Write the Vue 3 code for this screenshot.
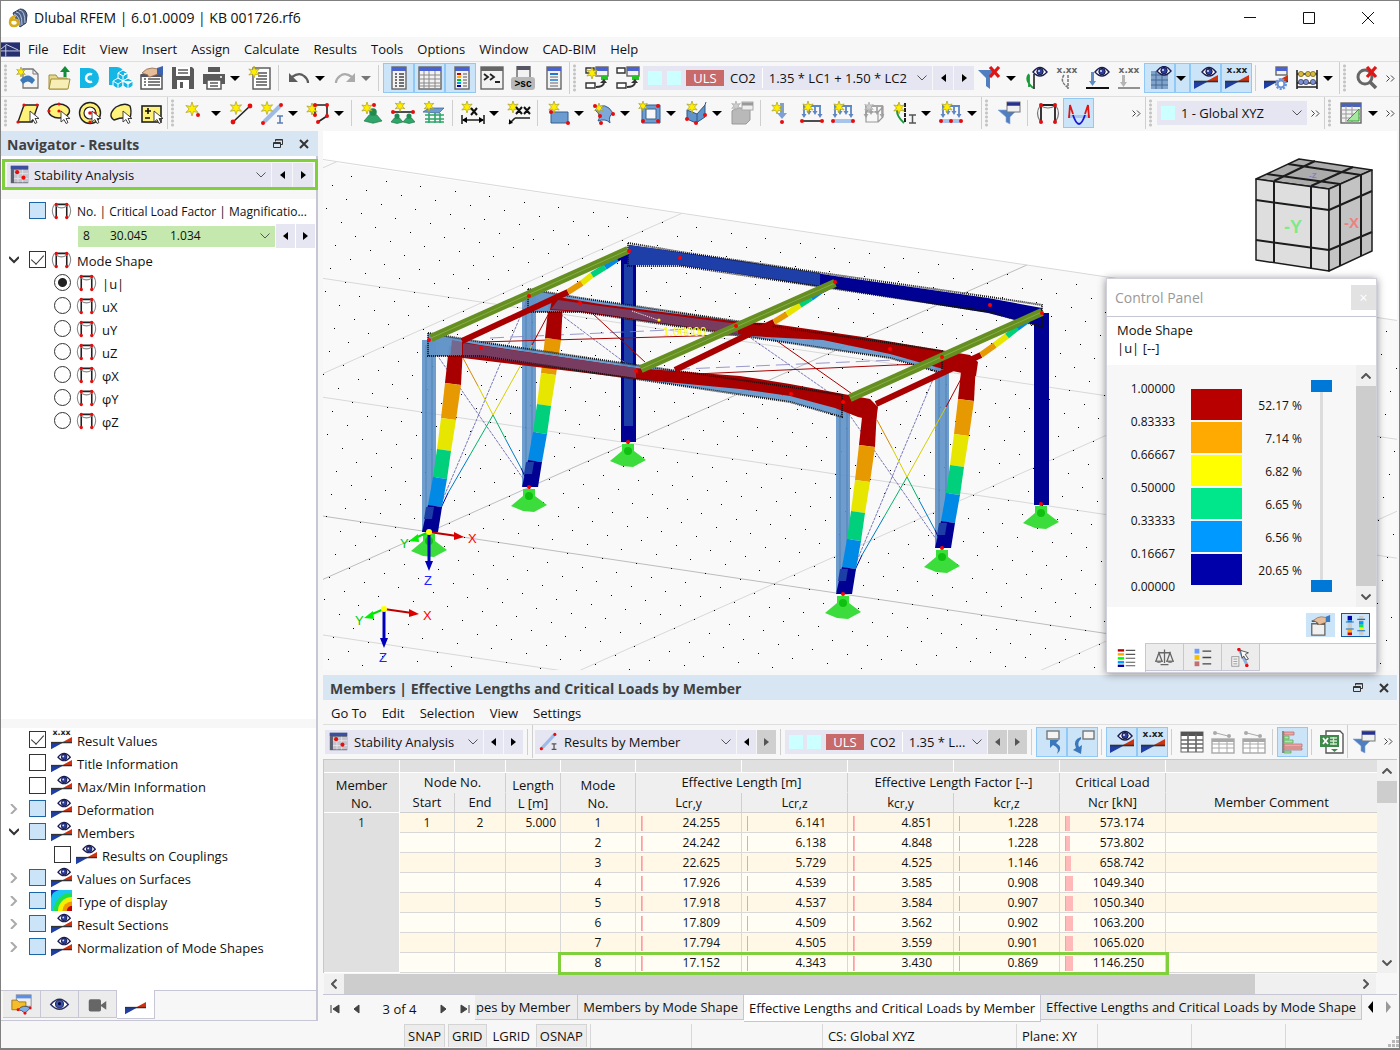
<script setup>
import { ref } from 'vue'

/* ---------- icon building blocks (24 x 24 canvas) ---------- */
const star = (x, y, r = 6, fill = '#ffee00', line = '#a89c28') => {
  const pts = []
  for (let k = 0; k < 12; k++) {
    const q = k % 2 ? r * 0.42 : r
    const a = (Math.PI * k) / 6 - Math.PI / 2
    pts.push((x + q * Math.cos(a)).toFixed(1) + ',' + (y + q * Math.sin(a)).toFixed(1))
  }
  return `<polygon points="${pts.join(' ')}" fill="${fill}" stroke="${line}" stroke-width=".7"/>`
}
const dot = (x, y, r = 2) => `<circle cx="${x}" cy="${y}" r="${r}" fill="#e80c0c"/>`
const line = (d, c = '#111', w = 1.5) => `<path d="${d}" fill="none" stroke="${c}" stroke-width="${w}"/>`
const eye = (x, y) =>
  `<path d="M${x - 7} ${y}q7 -9 14 0q-7 8 -14 0z" fill="#fff" stroke="#1b1b55" stroke-width="1.4"/><circle cx="${x}" cy="${y - 0.4}" r="3.2" fill="#2b3f9e" stroke="#15153f"/><circle cx="${x - 1}" cy="${y - 1}" r="1" fill="#dfe4ff"/>`
const xxx = (c = '#222') =>
  `<text x="12" y="7" font-size="9" font-weight="700" text-anchor="middle" fill="${c}" font-family="DejaVu Sans">x.xx</text>`
const wedge =
  '<path d="M0 16h13l-13 7z" fill="#1d3fa6"/><path d="M13 15l11 -6v6z" fill="#d2300f"/><path d="M0 15.500h24" stroke="#333" stroke-width="1.6"/>'
const cursor = '<path d="M14 10v11l3 -2.500 2 4 2 -1 -2 -4h4z" fill="#fff" stroke="#333" stroke-width=".9"/>'
const win = (x, y, w, h, bar = '#4a63d0') =>
  `<rect x="${x}" y="${y}" width="${w}" height="${h}" fill="#f2f2f2" stroke="#666" stroke-width="1.4"/><rect x="${x}" y="${y}" width="${w}" height="4" fill="${bar}"/>`
const funnel = '<path d="M1 9h19l-7 7v7l-4 -2v-5z" fill="#4f7fc0" stroke="#8aa9d8" stroke-width=".6"/>'
const cross = '<path d="M12 1l9 10M21 1l-9 10" stroke="#e01515" stroke-width="3.200"/>'
const arrows = (c = '#5d86c4') =>
  `<path d="M3 5h18M4 5v10M9 5v6M15 5v6M20 5v10" stroke="${c}" stroke-width="1.800" fill="none"/><path d="M1.500 13h5L4 17zM6.500 10h5L9 14zM12.500 10h5L15 14zM17.500 13h5L20 17z" fill="${c}"/>`
const greenFoot = (x, y, s) =>
  `<path d="M${x - s} ${y}l${s * 0.6} -${s * 0.7}h${s * 0.8}l${s * 0.6} ${s * 0.7}l-${s} ${s * 0.25}z" fill="#2fa56a" stroke="#146b3b" stroke-width=".6"/><circle cx="${x}" cy="${y - s}" r="${s * 0.42}" fill="#1f8a50"/>`
const frameShape =
  line('M6 20V5h12v15', '#222', 1.8) + line('M4 20q-5 -8 0 -15M20 20q5 -8 0 -15M6 7q6 4 12 0', '#888', 1.2) +
  dot(6, 5, 1.9) + dot(18, 5, 1.9) + dot(6, 20, 1.9) + dot(18, 20, 1.9)
const tableLines = (c) =>
  `<rect x="1" y="9" width="22" height="14" fill="#fff" stroke="${c}" stroke-width="1.4"/><path d="M1 14h22M1 18h22M8 10v13M16 10v13" stroke="${c}" stroke-width="1"/><rect x="1" y="9" width="22" height="3" fill="${c}"/>`

const icons = {
  newModel: '<path d="M7 3h10l5 5v14H7z" fill="#f4f4f4" stroke="#777" stroke-width="1.300"/><path d="M17 3v5h5" fill="none" stroke="#777"/><path d="M4 14q8 -9 15 0l-3 4q-4 -5 -9 0z" fill="#3d79b8"/>' + star(5, 6, 5),
  open: '<path d="M2 9h7l2 3h9v11H2z" fill="#e5d98c" stroke="#a08f3a"/><path d="M2 23l2 -10h19l-2 10z" fill="#f6eeb4" stroke="#a08f3a"/><path d="M18 0l-5 6h3.500v5h3V6H23z" fill="#138a3c"/>',
  dlubal: '<path d="M2 2h9a10 10 0 0 1 0 20H2z" fill="#14b6e6"/><path d="M14 8.500a4 4 0 1 0 0 7" fill="none" stroke="#fff" stroke-width="2.500"/>',
  cubes: '<path d="M0 1h8a8 8 0 0 1 7 5v13H0z" fill="#14b6e6"/><g fill="#14b6e6" stroke="#fff" stroke-width="1"><path d="M14 4l5 3v5l-5 3 -5 -3V7zM9 7l5 3 5 -3M14 10v5"/><path d="M9 12l5 3v5l-5 3 -5 -3v-5zM4 15l5 3 5 -3M9 18v5"/><path d="M19 12l5 3v5l-5 3 -5 -3v-5zM14 15l5 3 5 -3M19 18v5"/></g>',
  handList: '<rect x="1" y="9" width="21" height="14" fill="#fff" stroke="#555" stroke-width="1.500"/><path d="M4 13h2M4 16h2M4 19h2M8 13h12M8 16h12M8 19h12" stroke="#555" stroke-width="1.500"/><rect x="1" y="8" width="21" height="3" fill="#556"/><path d="M2 7q4 -5 10 -5l6 1v5l-8 3q-3 0 -2 -2z" fill="#e6bd98" stroke="#8a6a50" stroke-width=".8"/><path d="M17 2l6 -2v9l-6 -1z" fill="#3b63b0"/>',
  save: '<path d="M1 1h20l2 2v20H1z" fill="#5a5a5a"/><path d="M5 1h14v9H5z" fill="#fff"/><path d="M7 4h10M7 7h10" stroke="#5a5a5a" stroke-width="1.500"/><path d="M6 14h12v9H6z" fill="#fff"/><path d="M9 16h3v6H9z" fill="#5a5a5a"/>',
  print: '<path d="M6 1h12v5H6z" fill="#5a5a5a"/><path d="M1 8h22v10H1z" fill="#5a5a5a"/><path d="M5 14h14v9H5z" fill="#fff" stroke="#5a5a5a" stroke-width="1.500"/><path d="M8 17h8M8 20h8" stroke="#5a5a5a" stroke-width="1.400"/><path d="M18 11h2" stroke="#fff" stroke-width="1.500"/>',
  pageStar: '<rect x="5" y="2" width="17" height="21" fill="#fff" stroke="#555" stroke-width="1.400"/><path d="M10 7h9M10 10h9M8 13h11M8 16h11M8 19h11" stroke="#555" stroke-width="1.300"/>' + star(6, 6, 6),
  undo: '<path d="M5 11q7 -5 12 -1q4 3 4 7" fill="none" stroke="#5c5c5c" stroke-width="2.200" /><path d="M2 7v9h9z" fill="#5c5c5c"/>',
  redo: '<path d="M19 11q-7 -5 -12 -1q-4 3 -4 7" fill="none" stroke="#ababab" stroke-width="2.200" /><path d="M22 7v9h-9z" fill="#ababab"/>',
  winList: win(5, 1, 14, 22) + line('M8 8h2M12 8h5M8 11h2M12 11h5M8 14h2M12 14h5M8 17h2M12 17h5M8 20h2M12 20h5', '#444', 1.3),
  winGrid: win(1, 1, 22, 22) + line('M1 9h22M1 13h22M1 17h22M1 20h22M6 5v18M11 5v18M17 5v18', '#888', 1),
  winColor: win(6, 1, 14, 22) + '<path d="M8 8h4" stroke="#c00" stroke-width="2"/><path d="M8 11h4" stroke="#fa0" stroke-width="2"/><path d="M8 14h4" stroke="#0c0" stroke-width="2"/><path d="M8 17h4" stroke="#09f" stroke-width="2"/><path d="M8 20h4" stroke="#00b" stroke-width="2"/>' + line('M14 8h4M14 11h4M14 14h4M14 17h4M14 20h4', '#555', 1),
  console: win(1, 1, 22, 22, '#666') + line('M4 8l4 3 -4 3M10 8l4 3 -4 3M15 16h5', '#222', 1.8),
  script: win(6, 0, 13, 14, '#556') + '<rect x="0" y="11" width="24" height="13" rx="3" fill="#b8b8b8"/><text x="12" y="21" font-size="10" font-weight="700" text-anchor="middle" font-family="Liberation Sans">&gt;sc</text>',
  winBlue: win(5, 1, 14, 22) + line('M8 8h8', '#27c', 2) + line('M8 11h8M8 17h8M8 20h8', '#666', 1.2) + line('M8 14h8', '#27c', 1.5),
  comboNew: win(11, 1, 12, 9) + '<rect x="16" y="10" width="7" height="4" fill="#23c323"/><path d="M1 2h8v5H1zM1 17h9v5H1z" fill="#fff" stroke="#333" stroke-width="1.400"/><path d="M11 21q7 0 8 -4" fill="none" stroke="#333" stroke-width="2"/><path d="M15 17h7l-3 -4z" fill="#333"/>' + star(7, 7, 6),
  combo: win(11, 1, 12, 9) + '<rect x="16" y="10" width="7" height="4" fill="#23c323"/><path d="M1 2h8v5H1zM1 17h9v5H1z" fill="#fff" stroke="#333" stroke-width="1.400"/><path d="M11 21q7 0 8 -4" fill="none" stroke="#333" stroke-width="2"/><path d="M15 17h7l-3 -4z" fill="#333"/>',
  filterX: '<path d="M0 4h19l-7 8v11l-4 -3v-8z" fill="#4f7fc0"/>' + cross,
  loadEye: line('M5 9v12M5 8q-5 6 4 14', '#1b9a3a', 1.8) + line('M10 8v15', '#222', 1.6) + eye(16, 6),
  loadXxx: xxx('#666') + '<path d="M9 9q-5 7 5 13M13 9v14" fill="none" stroke="#777" stroke-width="1.500" stroke-dasharray="3 1"/>',
  arrowEye: '<path d="M5 6h3v9h2l-3.500 5 -3.500 -5h2z" fill="#5f8cc5"/>' + line('M0 22h23', '#111', 2) + eye(16, 6),
  arrowXxx: xxx('#666') + '<path d="M5 9h3v7h2l-3.500 5 -3.500 -5h2z" fill="#b5b5b5"/>' + line('M1 22h22', '#777', 1.6),
  gridEye: '<path d="M3 5h17v18H3z" fill="#82a4cb"/>' + line('M3 9h17M3 14h17M3 19h17M8 5v18M14 5v18', '#456b96', 1) + eye(16, 5),
  resEye: wedge + eye(15, 6),
  resXxx: xxx() + wedge,
  wedge,
  resGear: win(12, 1, 11, 8) + wedge + '<circle cx="17" cy="18" r="4.500" fill="#fff" stroke="#6a94d8" stroke-width="3" stroke-dasharray="2 1.100"/><circle cx="17" cy="18" r="3.400" fill="none" stroke="#6a94d8" stroke-width="2"/>',
  abacus: line('M2 4v19M22 4v19M2 8h20M2 17h20M2 21h20', '#222', 1.6) + '<g fill="#d6b83a" stroke="#6b5a15" stroke-width=".7"><circle cx="6" cy="8" r="2.600"/><circle cx="13" cy="8" r="2.600"/><circle cx="18" cy="8" r="2.600"/></g><g fill="#7a8fd6" stroke="#334" stroke-width=".7"><circle cx="6" cy="16" r="2.600"/><circle cx="11" cy="16" r="2.600"/><circle cx="18" cy="16" r="2.600"/></g>',
  zoomX: '<circle cx="10" cy="11" r="7" fill="none" stroke="#666" stroke-width="3"/><path d="M15 16l6 6" stroke="#666" stroke-width="3.500"/>' + cross,
  selPara: '<path d="M8 4h14l-6 17H2z" fill="#fff27a" stroke="#222" stroke-width="1.400"/>' + dot(8, 4, 1.6) + dot(21, 4, 1.6) + dot(2, 21, 1.6) + cursor,
  selEllipse: '<ellipse cx="12" cy="10" rx="10.500" ry="7" fill="#fff27a" stroke="#222" stroke-width="1.400"/>' + dot(12, 3, 1.6) + dot(2, 10, 1.6) + dot(12, 10, 1.6) + cursor,
  selRing: '<circle cx="12" cy="12" r="10.500" fill="#fff27a" stroke="#222" stroke-width="1.400"/><circle cx="12" cy="12" r="6" fill="#fff" stroke="#222" stroke-width="1.200"/>' + dot(12, 12, 1.8) + dot(12, 21, 1.6) + dot(17, 12, 1.6) + cursor,
  selPoly: '<path d="M7 6q9 -5 14 -1q2 5 0 12q-9 -1 -16 2q-7 -5 2 -13z" fill="#fff27a" stroke="#222" stroke-width="1.400"/>' + cursor,
  selPm: '<rect x="2" y="5" width="19" height="16" fill="#fff27a" stroke="#222" stroke-width="1.600"/>' + line('M5 10h6M8 7v6M5 17h5', '#111', 1.6) + cursor,
  starDot: star(9, 8, 7) + dot(15, 14),
  starLine: line('M4 21L21 5', '#222', 1.6) + star(7, 7, 6.5) + dot(4, 21, 2.4) + dot(21, 5, 2.4),
  starMember: line('M4 21L20 5', '#9ebbe6', 4) + star(7, 7, 6.5) + dot(3, 22) + dot(21, 4) + line('M17 15h6M20 15v7M17 22h6', '#5c7cb8', 1.6),
  starPoly: line('M9 14V4h12v11l-9 6', '#222', 1.6) + star(6, 8, 6) + dot(9, 4) + dot(21, 4) + dot(9, 14) + dot(21, 15) + dot(12, 21),
  supNode: greenFoot(13, 20, 9) + star(7, 7, 6) + dot(14, 4),
  supLine: greenFoot(6, 21, 6) + greenFoot(18, 21, 6) + line('M2 11h20', '#222', 1.6) + star(9, 5, 5.5) + dot(2, 11) + dot(22, 11),
  supSurf: line('M3 14h19M3 18h19M3 21h19M7 12v10M13 12v10M18 12v10', '#2fa56a', 1.6) + '<path d="M1 11l6 -4h15l-5 5z" fill="#6d9cd0" stroke="#35608f" stroke-width=".7"/>' + star(7, 5, 5.5),
  dimX: line('M1 14v9M23 14v9M2 19h20', '#222', 1.6) + '<path d="M1 19l5 -3v6zM23 19l-5 -3v6z"/>' + star(6, 6, 6) + line('M10 7l6 7M16 7l-6 7', '#111', 2),
  dimXX: line('M8 17h15M8 17l-6 6', '#222', 1.6) + '<path d="M2 23v-5l4 4z"/>' + star(6, 6, 6) + line('M9 6l6 7M15 6l-6 7M17 6l6 7M23 6l-6 7', '#111', 2),
  surf: '<path d="M5 11h17v11H5z" fill="#6d9cd0" stroke="#35608f"/>' + star(8, 6, 6) + dot(5, 11) + dot(22, 22),
  surfCurve: '<path d="M3 9q10 -10 18 3q-5 3 -3 10q-4 -5 -12 -2q4 -6 -3 -11z" fill="#7fa8da" stroke="#35608f"/>' + star(7, 7, 5) + dot(3, 5) + dot(21, 13) + dot(8, 15) + dot(9, 22),
  opening: '<path d="M4 4h18v18H4zM8 8v10h10V8z" fill="#6d9cd0" stroke="#35608f" fill-rule="evenodd"/>' + star(5, 5, 5) + dot(20, 5) + dot(5, 20) + dot(20, 20),
  solid: '<path d="M3 9l10 4 8 -9v12l-9 6 -9 -4z" fill="#5f93cb" stroke="#2d5788"/><path d="M13 13v9M21 4l1 -3" stroke="#2d5788"/>' + star(8, 6, 6) + dot(3, 18) + dot(12, 22) + dot(21, 14),
  boxGrey: '<path d="M2 10l4 -3h14v12l-4 4H2z" fill="#b9b9b9" stroke="#999"/>' + star(6, 5, 5, '#ccc', '#aaa') + '<rect x="12" y="1" width="11" height="8" fill="#eee" stroke="#aaa"/><path d="M12 3h11" stroke="#999" stroke-width="3"/>',
  loadN: '<path d="M11 2h4v10h3l-5 6 -5 -6h3z" fill="#7da0d6"/>' + star(8, 7, 6) + dot(13, 21),
  loadM: arrows() + line('M2 20h20', '#222', 1.6) + star(8, 6, 6) + dot(2, 20) + dot(22, 20),
  loadS: arrows() + '<path d="M2 18h20v4H2z" fill="#a9c4ea"/>' + star(8, 6, 6) + dot(2, 20) + dot(22, 20),
  loadSolid: arrows('#a5a5a5') + line('M4 11h12v10H4zM4 11l5 -5M16 11l5 -5v10l-5 5', '#999', 1.2) + star(7, 6, 5, '#ccc', '#aaa'),
  imper: line('M6 3q-6 9 5 19', '#1b9a3a', 1.8) + '<path d="M12 2v20" stroke="#222" stroke-width="2" stroke-dasharray="4 1"/>' + star(6, 7, 6) + line('M16 14h7M19.500 14v8M16 22h7', '#555', 1.5),
  loadFree: arrows() + '<path d="M2 18h20v4H2z" fill="#a9c4ea"/>' + star(8, 6, 6) + dot(2, 20) + dot(12, 20) + dot(22, 20),
  filterWin: funnel + '<rect x="10" y="1" width="13" height="10" fill="#f0f0f0" stroke="#777"/><path d="M10 3h13" stroke="#26308f" stroke-width="3.500"/>',
  frame: frameShape,
  frameBig: line('M5 21V4h14v17', '#222', 1.8) + line('M4 20q-5 -8 0 -15M20 20q5 -8 0 -15M5 5q7 4 14 0', '#777', 1.2) + dot(5, 4) + dot(19, 4) + dot(5, 21) + dot(19, 21),
  diagram: '<path d="M1 14h22v3H1z" fill="#a9c4e8"/>' + line('M2 17L3 4l3 9', '#e01515', 1.8) + line('M22 17L21 4l-3 9', '#e01515', 1.8) + line('M6 14q6 18 12 0', '#1616d8', 1.8),
  sheet: win(1, 2, 20, 20, '#4a63b8') + line('M1 9h20M1 13h20M1 17h20M6 5v17M12 5v17', '#999', 1) + '<path d="M19 8v12H7z" fill="#a6e8a0" stroke="#3a9a3a"/>',
  stability: '<path d="M1 1h22v22H1z" fill="#5b5f70"/><path d="M1 1h22v4H1z" fill="#3a4f9e"/><path d="M5 6h18v16H5z" fill="#c4c4cc"/>' + line('M10 6v16M16 6v16M5 11h18M5 17h18', '#e8e8ee', 1) + dot(9, 9, 2.6) + dot(17, 16, 2.6),
  member: line('M4 20L19 4', '#9ebbe6', 4) + dot(3, 21) + dot(20, 3) + line('M16 15h6M19 15v7M16 22h6', '#555', 1.6),
  arrowOut: '<rect x="7" y="1" width="12" height="8" fill="#f4f4f4" stroke="#777" stroke-width="1.400"/><path d="M10 10h9l-3 3q8 5 1 11q3 -6 -4 -9l-3 3z" fill="#3a78bb"/>',
  arrowIn: '<rect x="12" y="1" width="11" height="8" fill="#f4f4f4" stroke="#777" stroke-width="1.400"/><path d="M10 7q-9 3 -5 11l-3 2 8 4 1 -9 -3 2q-2 -5 2 -8z" fill="#3a78bb"/>',
  tableA: '<rect x="1" y="2" width="22" height="20" fill="#fff" stroke="#666"/><path d="M1 4h22" stroke="#555" stroke-width="4"/>' + line('M1 10h22M1 14h22M1 18h22M8 4v18M16 4v18', '#666', 1.6),
  tableB: tableLines('#a8a8a8') + '<path d="M5 3l12 3" stroke="#aaa"/><circle cx="4" cy="3" r="2" fill="#aaa"/><circle cx="18" cy="6" r="2" fill="#aaa"/>',
  bars: line('M2 1v22', '#777', 1.6) + '<path d="M3 2h10v3H3zM3 14h18v3H3zM3 18h18v2H3z" fill="#f0a6a6" stroke="#b06b6b" stroke-width=".7"/><path d="M3 6h5v3H3zM3 10h9v3H3zM3 21h7v2H3z" fill="#a6e8a6" stroke="#5a9a5a" stroke-width=".7"/>',
  excel: '<path d="M6 1h14l3 3v19H6z" fill="#fff" stroke="#555" stroke-width="1.400"/><path d="M0 5h19v12H0z" fill="#3e8a4a"/>' + line('M3 8l5 6M8 8l-5 6', '#fff', 1.8) + line('M10 8h7M10 11h7M10 14h7M13.500 7v8', '#cfe8cf', 1.3) + '<path d="M11 19h7l-3.500 3z" fill="#3e8a4a"/>',
  contour: '<path d="M0 0h24v24H0z" fill="#19c8f0"/><path d="M0 0h9q-8 2 -9 9z" fill="#1c2fb8"/><path d="M24 3A21 21 0 0 0 3 24h21z" fill="#1fdf4b"/><path d="M24 8A16 16 0 0 0 8 24h16z" fill="#f6f000"/><path d="M24 13A11 11 0 0 0 13 24h11z" fill="#f09a00"/><path d="M24 18a6 6 0 0 0 -6 6h6z" fill="#c80000"/>',
  folderTab: '<rect x="6" y="1" width="17" height="13" fill="#eee" stroke="#888"/><path d="M6 3h17" stroke="#5c8fe8" stroke-width="4"/><path d="M1 7h6l2 2h8v9H1z" fill="#f5bd2a" stroke="#96721a"/><path d="M8 18q6 -7 14 -2l-6 6q-4 -4 -8 -4z" fill="#7fb0ea" stroke="#333" stroke-width=".8"/>' + dot(8, 18, 1.6) + dot(22, 16, 1.6) + dot(16, 22, 1.6),
  eyeTab: '<path d="M2 12q10 -12 20 0q-10 11 -20 0z" fill="#fff" stroke="#2a2f66" stroke-width="1.700"/><circle cx="12" cy="11.500" r="4.600" fill="#3b52b0" stroke="#15153f"/><circle cx="12" cy="11" r="1.800" fill="#0a0a2a"/>',
  camera: '<rect x="2" y="6" width="14" height="14" rx="2" fill="#666"/><path d="M15 13l7 -5v10z" fill="#666"/>',
  legend: '<path d="M1 3h8" stroke="#b00" stroke-width="3"/><path d="M1 8h8" stroke="#fa0" stroke-width="3"/><path d="M1 13h8" stroke="#0f0" stroke-width="3"/><path d="M1 18h8" stroke="#09f" stroke-width="3"/><path d="M1 22.500h8" stroke="#00a" stroke-width="3"/>' + line('M11 3h12M11 8h12M11 13h12M11 18h12M11 22.500h12', '#555', 1.4),
  scales: line('M12 2v17M7 21h10M4 6h16M5 6L1 17h8zM19 6l-4 11h8z', '#666', 1.6) + '<path d="M0 16h10q-5 6 -10 0zM14 16h10q-5 6 -10 0z" fill="#777"/>',
  legend2: '<path d="M2 1h6v6H2z" fill="#6a9cff"/><path d="M2 9h6v6H2z" fill="#f5c000"/><path d="M2 17h6v6H2z" fill="#c07070"/>' + line('M12 4h11M12 12h11M12 20h11', '#444', 1.6),
  pick: '<rect x="1" y="11" width="9" height="12" fill="#f4f4f4" stroke="#888"/>' + line('M3 14h5M3 17h5M3 20h5', '#888', 1) + line('M11 3l9 18', '#8fb0e0', 4) + dot(10, 2, 2.2) + dot(20, 22, 2.2) + '<path d="M12 3l10 3 -4 2 4 6 -3 1 -3 -5 -2 3z" fill="#fff" stroke="#333"/>',
  handBox: '<path d="M2 10h15v13H2z" fill="#f0f0f0" stroke="#666" stroke-width="1.500"/><path d="M2 7h5l2 3h8" fill="none" stroke="#555" stroke-width="2"/><path d="M4 6q5 -4 9 -4l6 1v5l-8 3q-2 0 -2 -2z" fill="#e6bd98" stroke="#8a6a50" stroke-width=".8"/><path d="M18 2l5 -2v8h-5z" fill="#3b7ac0"/>',
  gauges: '<path d="M3 1h5v22H3zM16 1h5v22h-5z" fill="#ccc"/><path d="M3 1h5v5H3z" fill="#00a"/><path d="M3 6h5v2H3z" fill="#09f"/><path d="M3 17h5v3H3z" fill="#fa0"/><path d="M3 20h5v3H3z" fill="#c00"/><path d="M16 7h5v4h-5z" fill="#09f"/><path d="M16 11h5v4h-5z" fill="#0e4"/><path d="M16 14h5v3h-5z" fill="#fe0"/>' + line('M1 8h9M1 16h9M14 5h9M14 18h9', '#1a6fc0', 1.4)
}

const b = (icon, label, on = false) => ({ t: 'btn', icon, label, on })
const d = (label = 'More', on = false) => ({ t: 'drop', label, on })
const sep = { t: 'sep' }
const grip = { t: 'grip' }
const end = { t: 'end' }

const menus = ['File', 'Edit', 'View', 'Insert', 'Assign', 'Calculate', 'Results', 'Tools', 'Options', 'Window', 'CAD-BIM', 'Help']

const bar1 = [
  b('newModel', 'New'), b('open', 'Open'), b('dlubal', 'Dlubal Center'), b('cubes', 'Blocks'), b('handList', 'Base data'), b('save', 'Save'),
  b('print', 'Print'), d(), b('pageStar', 'Printout report'), sep, b('undo', 'Undo'), d(), b('redo', 'Redo'), { ...d(), off: true }, sep,
  b('winList', 'Navigator', true), b('winGrid', 'Tables', true), b('winColor', 'Control panel', true), b('console', 'Console'), b('script', 'Script'), b('winBlue', 'Messages'),
  end, grip, b('comboNew', 'New combination'), b('combo', 'Combinations'), { t: 'case' },
  b('filterX', 'Clear filter'), d(), b('loadEye', 'Show loads'), b('loadXxx', 'Load values'), b('arrowEye', 'Show reactions'), b('arrowXxx', 'Reaction values'),
  b('gridEye', 'Show mesh', true), d('Mesh options', true), b('resEye', 'Show results', true), b('resXxx', 'Show values', true), sep,
  b('resGear', 'Result settings'), b('abacus', 'Calculate'), d(), { t: 'fill' }, end, grip, b('zoomX', 'Reset zoom'), { t: 'more' }
]
const bar2 = [
  b('selPara', 'Select parallelogram'), b('selEllipse', 'Select ellipse'), b('selRing', 'Select ring'), b('selPoly', 'Select polygon'), b('selPm', 'Add to selection'),
  end, grip, b('starDot', 'Node'), d(), b('starLine', 'Line'), b('starMember', 'Member'), d(), b('starPoly', 'Polyline'), d(), sep,
  b('supNode', 'Nodal support'), b('supLine', 'Line support'), b('supSurf', 'Surface support'), sep, b('dimX', 'Dimension'), d(), b('dimXX', 'Note'), sep,
  b('surf', 'Surface'), d(), b('surfCurve', 'Curved surface'), d(), b('opening', 'Opening'), d(), b('solid', 'Solid'), d(), b('boxGrey', 'Block'), sep,
  b('loadN', 'Nodal load'), b('loadM', 'Member load'), b('loadS', 'Surface load'), b('loadSolid', 'Solid load'), b('imper', 'Imperfection'), d(), b('loadFree', 'Free load'), d(),
  end, grip, b('filterWin', 'Filter'), sep, b('frameBig', 'Mode shape'), b('diagram', 'Diagram', true), { t: 'fill' }, { t: 'more' },
  end, grip, { t: 'axes' }, { t: 'more' }, end, grip, b('sheet', 'Table'), d(), { t: 'more' }
]

/* ---------- navigator ---------- */
const dof = ref('|u|')
const dofs = ['|u|', 'uX', 'uY', 'uZ', 'φX', 'φY', 'φZ']
const lower = [
  { n: 'Result Values', icon: 'resXxx', on: true },
  { n: 'Title Information', icon: 'resEye' },
  { n: 'Max/Min Information', icon: 'resEye' },
  { n: 'Deformation', icon: 'resEye', part: true, arrow: 'right' },
  { n: 'Members', icon: 'resEye', part: true, arrow: 'down' },
  { n: 'Results on Couplings', icon: 'resEye', child: true },
  { n: 'Values on Surfaces', icon: 'resEye', part: true, arrow: 'right' },
  { n: 'Type of display', icon: 'contour', part: true, arrow: 'right' },
  { n: 'Result Sections', icon: 'resEye', part: true, arrow: 'right' },
  { n: 'Normalization of Mode Shapes', icon: 'resEye', part: true, arrow: 'right' }
]
const navTabs = [
  { icon: 'folderTab', label: 'Data' },
  { icon: 'eyeTab', label: 'Display' },
  { icon: 'camera', label: 'Views' },
  { icon: 'wedge', label: 'Results', on: true }
]

/* ---------- legend ---------- */
const scale = ['1.00000', '0.83333', '0.66667', '0.50000', '0.33333', '0.16667', '0.00000']
const bands = [
  { c: '#b90000', p: '52.17 %' },
  { c: '#ffaa00', p: '7.14 %' },
  { c: '#ffff00', p: '6.82 %' },
  { c: '#00e68a', p: '6.65 %' },
  { c: '#0099ff', p: '6.56 %' },
  { c: '#0000aa', p: '20.65 %' }
]

/* ---------- results table ---------- */
const rows = [
  ['24.255', '6.141', '4.851', '1.228', '573.174', 4],
  ['24.242', '6.138', '4.848', '1.228', '573.802', 4],
  ['22.625', '5.729', '4.525', '1.146', '658.742', 5],
  ['17.926', '4.539', '3.585', '0.908', '1049.340', 7],
  ['17.918', '4.537', '3.584', '0.907', '1050.340', 7],
  ['17.809', '4.509', '3.562', '0.902', '1063.200', 7],
  ['17.794', '4.505', '3.559', '0.901', '1065.020', 7],
  ['17.152', '4.343', '3.430', '0.869', '1146.250', 7]
]
const barWidth = (c, row) => (c === 4 ? row[5] : c % 2 ? 0 : 1)
const sheets = ['Members by Mode Shape', 'Effective Lengths and Critical Loads by Member', 'Effective Lengths and Critical Loads by Mode Shape']

/* ---------- model geometry ---------- */
const O = [429, 532]
const at = (i, j) => [O[0] + i * 34.5 + j * 19.93, O[1] + i * 5.17 - j * 8.9]
const grid = []
for (let k = -30; k <= 40; k += 10) grid.push([at(k, -30), at(k, 30), k === 0])
for (let k = -30; k <= 30; k += 10) grid.push([at(-30, k), at(40, k), k === 0])
let dots = ''
for (let i = -30; i <= 40; i++)
  for (let j = -30; j < 30; j++) {
    const [x, y] = at(i, j)
    if (x > 320 && x < 1400 && y > 130 && y < 680) dots += `M${Math.round(x)} ${Math.round(y)}h1v1h-1z`
  }
const shade = ['#a80000', '#e69900', '#e6e600', '#00cf7c', '#008ae6', '#000092']
const left = [[20, -186], [16, -149], [12, -114], [8, -83], [4, -55], [-1, -27], [-7, 0]]
const right = [[34, -186], [32, -147], [27, -112], [22, -81], [18, -53], [13, -25], [9, 0]]
const leaning = [[529, 487], [429, 532], [942, 548], [843, 594]].map((p) => ({
  p,
  parts: shade.map((c, k) => ({
    c,
    d: [left[k], right[k], right[k + 1], left[k + 1]].map((q) => p[0] + q[0] + ',' + (p[1] + q[1])).join(' ')
  }))
}))
const supports = [[429, 532], [529, 487], [628, 442], [843, 594], [942, 548], [1041, 504]]
const purlins = ['M431 338L628 250', 'M641 369L835 283', 'M850 398L1042 312']
const chain = (pts) => pts.slice(1).map((p, k) => ({ c: shade[k], d: `M${pts[k].join(' ')}L${p.join(' ')}` }))
const deformedPurlins = [
  ...chain([[462, 341], [568, 292], [582, 283], [592, 275], [605, 267], [617, 259], [628, 252]]),
  ...chain([[675, 370], [774, 322], [787, 314], [800, 305], [811, 298], [822, 290], [835, 283]]),
  ...chain([[876, 404], [981, 355], [995, 345], [1007, 336], [1017, 328], [1028, 320], [1041, 312]])
]
const nodes = [[429, 340], [481, 348], [636, 371], [791, 394], [843, 402], [529, 296], [580, 303], [736, 326], [890, 349], [942, 357], [629, 251], [680, 258], [835, 282], [990, 305], [1042, 313]]
const braces = []
for (const [x, y] of [[0, 0], [414, 62]]) {
  const m = (c, a, e, f, g) => braces.push({ c, d: `M${a + x} ${e + y}L${f + x} ${g + y}` })
  m('#d68a00', 463, 358, 478, 386)
  m('#d6cf00', 478, 386, 493, 415)
  m('#00b56c', 493, 415, 506, 440)
  m('#007ac8', 506, 440, 521, 468)
  m('#000092', 521, 468, 529, 485)
  m('#a80000', 548, 315, 532, 345)
  m('#d6cf00', 532, 345, 493, 415)
  m('#00b56c', 493, 415, 470, 455)
  m('#007ac8', 470, 455, 448, 493)
  m('#000092', 448, 493, 440, 510)
}
const outline = (dx, dy) => {
  const p = [[428, 333], [481, 342], [636, 365], [790, 387], [842, 395], [842, 417], [790, 402], [636, 379], [481, 356], [428, 356]]
  return p.map((q) => q[0] + dx + ',' + (q[1] + dy)).join(' ')
}
</script>

<template>
  <div class="app">
    <header class="titlebar">
      <svg class="logo" viewBox="0 0 20 20">
        <path d="M5 5l7 -4q6 0 7 6l-1 8 -6 4z" fill="#4b5f86" stroke="#2b3853" />
        <path d="M8 4q6 0 6 13M11 2q6 0 6 13M6 6q6 2 6 12" stroke="#b9c8e2" fill="none" />
        <path d="M8 8q-6 1 -6 6q0 4 4 4t4 -3.500q0 -3 -4 -3q-3 0 -4 2" fill="none" stroke="#d9a91c" stroke-width="2.500" />
      </svg>
      <span class="caption">Dlubal RFEM | 6.01.0009 | KB 001726.rf6</span>
      <button class="sys" aria-label="Minimize"><svg viewBox="0 0 12 12"><path d="M0 5.500h12" /></svg></button>
      <button class="sys" aria-label="Maximize"><svg viewBox="0 0 12 12"><path d="M.5 .5h11v11H.5z" /></svg></button>
      <button class="sys" aria-label="Close"><svg viewBox="0 0 12 12"><path d="M0 0l12 12M12 0L0 12" /></svg></button>
    </header>

    <nav class="menubar">
      <svg class="menulogo" viewBox="0 0 20 15"><path d="M0 0h20v15H0z" fill="#27306f" /><path d="M0 9h20M5 3v12M5 3L0 7M5 2l13 6" stroke="#cfd3ee" fill="none" /></svg>
      <button v-for="m in menus" :key="m">{{ m }}</button>
    </nav>

    <div v-for="(bar, n) in [bar1, bar2]" :key="n" class="toolbar main">
      <i class="grip"></i>
      <template v-for="(it, k) in bar" :key="k">
        <button v-if="it.t === 'btn'" class="tool" :class="{ on: it.on }" :aria-label="it.label">
          <svg viewBox="0 0 24 24" v-html="icons[it.icon]"></svg>
        </button>
        <button v-else-if="it.t === 'drop'" class="drop" :class="{ on: it.on, off: it.off }" :aria-label="it.label"><i class="tri down"></i></button>
        <i v-else-if="it.t === 'sep'" class="sep"></i>
        <i v-else-if="it.t === 'end'" class="end"></i>
        <i v-else-if="it.t === 'grip'" class="grip"></i>
        <i v-else-if="it.t === 'fill'" class="fill"></i>
        <button v-else-if="it.t === 'more'" class="more" aria-label="More tools"><svg viewBox="0 0 9 7"><path d="M.5 .5L3.500 3.500 .5 6.500M5 .5L8 3.500 5 6.500" /></svg></button>
        <template v-else-if="it.t === 'case'">
          <div class="combo case">
            <i class="swatch"></i><i class="swatch"></i><b class="badge">ULS</b><span class="co">CO2</span>
            <select aria-label="Load combination"><option>1.35 * LC1 + 1.50 * LC2</option></select>
            <svg class="chev" viewBox="0 0 10 6"><path d="M.5 .5L5 5 9.500 .5" /></svg>
          </div>
          <button class="step" aria-label="Previous"><i class="tri left"></i></button>
          <button class="step" aria-label="Next"><i class="tri right"></i></button>
        </template>
        <div v-else class="combo axes">
          <i class="swatch"></i>
          <select aria-label="Coordinate system"><option>1 - Global XYZ</option></select>
          <svg class="chev" viewBox="0 0 10 6"><path d="M.5 .5L5 5 9.500 .5" /></svg>
        </div>
      </template>
    </div>

    <div class="body">
      <aside class="navigator">
        <div class="dockhead">
          <h2>Navigator - Results</h2>
          <button aria-label="Float"><svg viewBox="0 0 12 12"><path d="M3.500 3.500V1.500h7v5h-2M1.500 4.500h7v5h-7zM1.500 5.500h7M3.500 2h7" /></svg></button>
          <button aria-label="Close"><svg viewBox="0 0 12 12"><path d="M2 2l8 8M10 2l-8 8" class="x" /></svg></button>
        </div>
        <div class="pickrow">
          <div class="combo">
            <svg class="pic" viewBox="0 0 24 24" v-html="icons.stability"></svg>
            <select aria-label="Analysis"><option>Stability Analysis</option></select>
            <svg class="chev" viewBox="0 0 10 6"><path d="M.5 .5L5 5 9.500 .5" /></svg>
          </div>
          <button class="step" aria-label="Previous"><i class="tri left"></i></button>
          <button class="step" aria-label="Next"><i class="tri right"></i></button>
        </div>

        <div class="tree upper">
          <label class="row long">
            <i class="exp"></i><input type="checkbox" class="part" />
            <svg class="ic" viewBox="0 0 24 24" v-html="icons.frame"></svg>
            <span>No. | Critical Load Factor | Magnificatio...</span>
          </label>
          <div class="modes">
            <div class="combo green">
              <span class="c1">8</span><span class="c2">30.045</span>
              <select aria-label="Mode"><option>1.034</option></select>
              <svg class="chev" viewBox="0 0 10 6"><path d="M.5 .5L5 5 9.500 .5" /></svg>
            </div>
            <button class="step" aria-label="Previous mode"><i class="tri left"></i></button>
            <button class="step" aria-label="Next mode"><i class="tri right"></i></button>
          </div>
          <label class="row">
            <i class="exp"><svg viewBox="0 0 10 10"><path d="M0 2l5 5 5 -5" /></svg></i><input type="checkbox" checked />
            <svg class="ic" viewBox="0 0 24 24" v-html="icons.frame"></svg><span>Mode Shape</span>
          </label>
          <label v-for="f in dofs" :key="f" class="row child">
            <i class="exp"></i><input v-model="dof" type="radio" name="dof" :value="f" />
            <svg class="ic" viewBox="0 0 24 24" v-html="icons.frame"></svg><span>{{ f }}</span>
          </label>
        </div>
        <div class="split"></div>
        <div class="tree">
          <label v-for="r in lower" :key="r.n" class="row" :class="{ child: r.child }">
            <i class="exp" :class="r.arrow">
              <svg v-if="r.arrow" viewBox="0 0 10 10"><path :d="r.arrow === 'down' ? 'M0 2l5 5 5 -5' : 'M2 0l5 5 -5 5'" /></svg>
            </i>
            <input type="checkbox" :class="{ part: r.part }" :checked="r.on" />
            <svg class="ic" viewBox="0 0 24 24" v-html="icons[r.icon]"></svg><span>{{ r.n }}</span>
          </label>
        </div>
        <div class="navtabs">
          <button v-for="t in navTabs" :key="t.label" :class="{ on: t.on }" :aria-label="t.label"><svg viewBox="0 0 24 24" v-html="icons[t.icon]"></svg></button>
        </div>
      </aside>

      <main class="work">
        <section class="view">
          <svg class="scene" viewBox="323 131 1074 539" preserveAspectRatio="xMinYMin slice">
            <path d="M323 161L1398 320V680H323z" fill="#f9f9f9" />
            <path v-for="(g, k) in grid" :key="k" :d="`M${g[0]}L${g[1]}`" :stroke="g[2] ? '#bdbdbd' : '#d8d8d8'" />
            <path :d="dots" fill="#000" shape-rendering="crispEdges" />

            <!-- back frame -->
            <path d="M621 256h15v186h-15z" fill="#000092" /><path d="M624 264h9v162h-9z" fill="#1d3ea6" />
            <path d="M1034 313h15v192h-15z" fill="#000092" />
            <path d="M629 245L740 261 835 276 988 298 1042 308V327L988 313 830 288 740 274 678 265 627 265z" fill="#000092" />
            <path d="M629 245L740 261 820 273V287L740 274 678 265 627 265z" fill="#1f3fa8" />
            <polygon class="hatch" :points="outline(200, -90)" />

            <!-- undeformed columns -->
            <g class="ghost">
              <path d="M422 340h14v192h-14z" /><path d="M522 296h14v190h-14z" />
              <path d="M836 402h14v190h-14z" /><path d="M935 358h14v190h-14z" />
            </g>
            <path class="ghostline" d="M426 345v185M432 345v185M526 300v185M532 300v185M840 405v186M847 405v186M939 362v185M946 362v185" />

            <!-- roof and wall bracing -->
            <path class="dash" d="M430 345L529 487M429 532L529 296M844 407L943 549M843 594L942 358M548 305L636 371M745 334L840 400" />
            <path class="longdash" d="M490 338L736 327M636 371L942 358" />
            <path d="M480 342L767 334M580 302L645 362M767 334L855 396M673 375L940 363" stroke="#a80000" fill="none" />
            <path v-for="(l, k) in braces" :key="k" :d="l.d" :stroke="l.c" />

            <!-- deformed frames -->
            <g v-for="(c, k) in leaning" :key="k">
              <polygon v-for="q in c.parts" :key="q.c" :points="q.d" :fill="q.c" />
              <path :d="`M${c.p[0] - 3} ${c.p[1] - 25}h8l-2 12h-8z`" fill="#1d3ea6" />
            </g>
            <polygon class="ghost" :points="outline(100, -44)" />
            <polygon class="ghost" :points="outline(0, 0)" />
            <path d="M552 296L600 304 740 322 767 323 863 337 970 355 978 362 976 376 943 369 890 354 823 340 750 336 580 312 550 310z" fill="#a80000" />
            <path d="M558 300L600 306 738 324V334L580 311 551 309z" fill="#783c60" />
            <path d="M452 340L480 345 635 368 740 376 790 384 870 399 878 407 876 421 858 417 835 408 790 396 740 389 635 379 463 358 450 358z" fill="#a80000" />
            <path d="M463 343L636 368V378L480 357 463 357z" fill="#783c60" />
            <path d="M429 334l33 5v17h-33zM529 290l25 4 -5 18h-20z" fill="#5f93c9" opacity=".7" />
            <polygon class="hatch" :points="outline(100, -44)" />
            <polygon class="hatch" :points="outline(0, 0)" />

            <path v-for="(q, k) in deformedPurlins" :key="k" :d="q.d" :stroke="q.c" stroke-width="6" />
            <path v-for="p in purlins" :key="p" :d="p" stroke="#668f22" stroke-width="8" />
            <path v-for="p in purlins" :key="p" :d="p" stroke="#86ad42" stroke-width="1" />

            <!-- supports -->
            <g v-for="(s, k) in supports" :key="k" :transform="`translate(${s[0]} ${s[1]})`">
              <path d="M-18 19L-6 9H6L18 18 5 25 -6 24z" fill="#3ddc3d" />
              <path d="M-6 2H6V12Q0 18 -6 12z" fill="#3ae03a" />
              <circle cx="0" cy="9" r="4" fill="#10c010" />
              <circle cx="0" cy="0" r="2" fill="#f00" />
            </g>
            <circle v-for="(n, k) in nodes" :key="k" :cx="n[0]" :cy="n[1]" r="2" fill="#f00" />
            <path d="M632 311L658 320" stroke="#fff" stroke-dasharray="1 1" /><circle cx="659" cy="320" r="1.500" fill="#ff0" />
            <text x="663" y="336" class="val">1.00000</text>

            <!-- axes -->
            <g v-for="(a, k) in [[429, 532], [384, 609]]" :key="k" :transform="`translate(${a[0]} ${a[1]})`">
              <path d="M0 0L28 4" stroke="#b00" stroke-width="2" /><path d="M25 0l10 5 -10 3z" fill="#d00" />
              <path d="M0 0L-14 6" stroke="#0d0" stroke-width="2" /><path d="M-11 2l-9 7 10 1z" fill="#0e0" />
              <path d="M0 0V30" stroke="#00b" stroke-width="3" /><path d="M-4 29h8l-4 10z" fill="#00b" />
              <circle r="3" fill="#ff0" />
              <text x="39" y="11" fill="#f00">X</text><text x="-29" y="16" fill="#0c0">Y</text><text x="-5" y="53" fill="#22f">Z</text>
            </g>

            <!-- orientation cube -->
            <g stroke="#1c1c1c" stroke-width="1.500" stroke-linejoin="round">
              <path d="M1256 179L1299 159 1372 170 1329 189z" fill="#acacac" />
              <path d="M1256 179L1329 189V271L1256 260z" fill="#dedede" />
              <path d="M1329 189L1372 170V251L1329 271z" fill="#c3c3c3" />
              <path d="M1274 181V262M1311 186V269M1256 200L1329 210 1372 191M1256 240L1329 250 1372 232M1340 184V266M1361 175V256M1267 174L1340 184M1288 164L1361 175M1274 181L1315 161M1311 186L1353 167" fill="none" stroke-width="2" />
            </g>
            <text x="1284" y="233" class="face" fill="#7fe98a">-Y</text>
            <text x="1344" y="228" class="face small" fill="#ee8080">-X</text>
            <text x="1309" y="178" class="face top" fill="#7f7fc4">-Z</text>
          </svg>

          <div class="panel">
            <div class="phead"><span>Control Panel</span><button aria-label="Close panel">×</button></div>
            <div class="pname">Mode Shape<br />|u| [--]</div>
            <div class="legend">
              <ul class="vals"><li v-for="s in scale" :key="s">{{ s }}</li></ul>
              <div class="cols"><i v-for="x in bands" :key="x.c" :style="{ background: x.c }"></i></div>
              <ul class="pcts"><li v-for="x in bands" :key="x.p">{{ x.p }}</li></ul>
              <div class="range">
                <input type="range" min="0" max="1" step="0.01" value="1" aria-label="Upper limit" />
                <input type="range" min="0" max="1" step="0.01" value="0" aria-label="Lower limit" />
              </div>
              <div class="vbar">
                <button aria-label="Scroll up"><svg class="chev" viewBox="0 0 10 6"><path d="M.5 5.500L5 1 9.500 5.500" /></svg></button>
                <i class="thumb full"></i>
                <button aria-label="Scroll down"><svg class="chev" viewBox="0 0 10 6"><path d="M.5 .5L5 5 9.500 .5" /></svg></button>
              </div>
            </div>
            <div class="pbtns">
              <button aria-label="Edit colors"><svg viewBox="0 0 24 24" v-html="icons.handBox"></svg></button>
              <button class="sel" aria-label="Scale options"><svg viewBox="0 0 24 24" v-html="icons.gauges"></svg></button>
            </div>
            <div class="ptabs">
              <button class="on" aria-label="Colors"><svg viewBox="0 0 24 24" v-html="icons.legend"></svg></button>
              <button aria-label="Factors"><svg viewBox="0 0 24 24" v-html="icons.scales"></svg></button>
              <button aria-label="List"><svg viewBox="0 0 24 24" v-html="icons.legend2"></svg></button>
              <button aria-label="Filter"><svg viewBox="0 0 24 24" v-html="icons.pick"></svg></button>
            </div>
          </div>
        </section>

        <section class="results">
          <div class="dockhead">
            <h2>Members | Effective Lengths and Critical Loads by Member</h2>
            <button aria-label="Float"><svg viewBox="0 0 12 12"><path d="M3.500 3.500V1.500h7v5h-2M1.500 4.500h7v5h-7zM1.500 5.500h7M3.500 2h7" /></svg></button>
            <button aria-label="Close"><svg viewBox="0 0 12 12"><path d="M2 2l8 8M10 2l-8 8" class="x" /></svg></button>
          </div>
          <nav class="submenu"><button v-for="m in ['Go To', 'Edit', 'Selection', 'View', 'Settings']" :key="m">{{ m }}</button></nav>
          <div class="toolbar sub">
            <div class="combo w1">
              <svg class="pic" viewBox="0 0 24 24" v-html="icons.stability"></svg>
              <select aria-label="Analysis type"><option>Stability Analysis</option></select>
              <svg class="chev" viewBox="0 0 10 6"><path d="M.5 .5L5 5 9.500 .5" /></svg>
            </div>
            <button class="step" aria-label="Previous"><i class="tri left"></i></button>
            <button class="step" aria-label="Next"><i class="tri right"></i></button>
            <i class="sep"></i><i class="end"></i>
            <div class="combo w2">
              <svg class="pic" viewBox="0 0 24 24" v-html="icons.member"></svg>
              <select aria-label="Result group"><option>Results by Member</option></select>
              <svg class="chev" viewBox="0 0 10 6"><path d="M.5 .5L5 5 9.500 .5" /></svg>
            </div>
            <button class="step" aria-label="Previous group"><i class="tri left"></i></button>
            <button class="step dis" aria-label="Next group"><i class="tri right"></i></button>
            <i class="sep"></i>
            <div class="combo w3">
              <i class="swatch"></i><i class="swatch"></i><b class="badge">ULS</b><span class="co">CO2</span>
              <select aria-label="Combination"><option>1.35 * L...</option></select>
              <svg class="chev" viewBox="0 0 10 6"><path d="M.5 .5L5 5 9.500 .5" /></svg>
            </div>
            <button class="step dis" aria-label="Previous case"><i class="tri left"></i></button>
            <button class="step dis" aria-label="Next case"><i class="tri right"></i></button>
            <i class="sep"></i>
            <button class="tool on" aria-label="Jump to graphic"><svg viewBox="0 0 24 24" v-html="icons.arrowOut"></svg></button>
            <button class="tool on" aria-label="Jump from graphic"><svg viewBox="0 0 24 24" v-html="icons.arrowIn"></svg></button>
            <i class="sep"></i>
            <button class="tool on" aria-label="Show results"><svg viewBox="0 0 24 24" v-html="icons.resEye"></svg></button>
            <button class="tool on" aria-label="Show values"><svg viewBox="0 0 24 24" v-html="icons.resXxx"></svg></button>
            <i class="sep"></i>
            <button class="tool" aria-label="Full table"><svg viewBox="0 0 24 24" v-html="icons.tableA"></svg></button>
            <button class="tool" aria-label="Selected objects"><svg viewBox="0 0 24 24" v-html="icons.tableB"></svg></button>
            <button class="tool" aria-label="Visible objects"><svg viewBox="0 0 24 24" v-html="icons.tableB"></svg></button>
            <i class="sep"></i>
            <button class="tool on" aria-label="Relation bars"><svg viewBox="0 0 24 24" v-html="icons.bars"></svg></button>
            <i class="sep"></i>
            <button class="tool" aria-label="Export to Excel"><svg viewBox="0 0 24 24" v-html="icons.excel"></svg></button>
            <i class="end"></i>
            <button class="tool" aria-label="Filter table"><svg viewBox="0 0 24 24" v-html="icons.filterWin"></svg></button>
            <i class="fill"></i>
            <button class="more" aria-label="More tools"><svg viewBox="0 0 9 7"><path d="M.5 .5L3.500 3.500 .5 6.500M5 .5L8 3.500 5 6.500" /></svg></button>
          </div>

          <div class="tablearea">
            <table>
              <colgroup><col class="cf" /><col class="ca" /><col class="cb" /><col class="ca" /><col class="cm" /><col v-for="k in 5" :key="k" class="cv" /><col /></colgroup>
              <thead>
                <tr class="strip"><th v-for="k in 11" :key="k"></th></tr>
                <tr>
                  <th rowspan="2" class="dark two">Member<br />No.</th><th colspan="2" class="nb">Node No.</th><th rowspan="2" class="two">Length<br />L [m]</th><th rowspan="2" class="two">Mode<br />No.</th>
                  <th colspan="2" class="nb">Effective Length [m]</th><th colspan="2" class="nb">Effective Length Factor [--]</th><th class="nb">Critical Load</th><th class="nb"></th>
                </tr>
                <tr><th>Start</th><th>End</th><th>L<sub>cr,y</sub></th><th>L<sub>cr,z</sub></th><th>k<sub>cr,y</sub></th><th>k<sub>cr,z</sub></th><th>N<sub>cr</sub> [kN]</th><th>Member Comment</th></tr>
              </thead>
              <tbody>
                <tr v-for="(r, n) in rows" :key="n">
                  <th v-if="!n" rowspan="8" class="dark member">1</th>
                  <td>{{ n ? '' : 1 }}</td><td>{{ n ? '' : 2 }}</td><td class="len">{{ n ? '' : '5.000' }}</td><td>{{ n + 1 }}</td>
                  <td v-for="c in 5" :key="c"><div class="num"><i :style="{ width: barWidth(c - 1, r) + 'px' }"></i>{{ r[c - 1] }}</div></td><td></td>
                </tr>
              </tbody>
            </table>
            <div class="vbar">
              <button aria-label="Scroll up"><svg class="chev" viewBox="0 0 10 6"><path d="M.5 5.500L5 1 9.500 5.500" /></svg></button>
              <i class="thumb short"></i><i class="fill"></i>
              <button aria-label="Scroll down"><svg class="chev" viewBox="0 0 10 6"><path d="M.5 .5L5 5 9.500 .5" /></svg></button>
            </div>
            <div class="mark"></div>
          </div>
          <div class="hbar">
            <button aria-label="Scroll left"><svg viewBox="0 0 6 10"><path d="M5.500 .5L1 5 5.500 9.500" /></svg></button>
            <i class="thumb"></i><i class="rest"></i>
            <button aria-label="Scroll right"><svg viewBox="0 0 6 10"><path d="M.5 .5L5 5 .5 9.500" /></svg></button>
          </div>
          <div class="sheets">
            <div class="pager">
              <button aria-label="First"><svg viewBox="0 0 10 10"><path d="M1 1v8M9 1v8L3 5z" /></svg></button>
              <button aria-label="Back"><svg viewBox="0 0 10 10"><path d="M8 1v8L3 5z" /></svg></button>
              <span>3 of 4</span>
              <button aria-label="Forward"><svg viewBox="0 0 10 10"><path d="M2 1v8l5 -4z" /></svg></button>
              <button aria-label="Last"><svg viewBox="0 0 10 10"><path d="M9 1v8M1 1v8l6 -4z" /></svg></button>
            </div>
            <button class="sheet first">pes by Member</button>
            <button v-for="(s, k) in sheets" :key="s" class="sheet" :class="{ on: k === 1 }">{{ s }}</button>
            <button class="scroll" aria-label="Tabs left"><i class="tri left"></i></button>
            <button class="scroll off" aria-label="Tabs right"><i class="tri right"></i></button>
          </div>
        </section>
      </main>
    </div>

    <footer class="status">
      <button class="in">SNAP</button><button class="in">GRID</button><button>LGRID</button><button class="in">OSNAP</button>
      <span class="s1"></span><span class="s2"></span><span class="s3">CS: Global XYZ</span><span class="s4">Plane: XY</span><span class="s5"></span><span class="s5"></span><span class="s5"></span>
      <svg class="resize" viewBox="0 0 12 12"><path d="M9 0h3v3H9zM9 4h3v3H9zM9 8h3v3H9zM5 4h3v3H5zM5 8h3v3H5zM1 8h3v3H1z" fill="#b8b8b8" /></svg>
    </footer>
  </div>
</template>

<style>
body { background: #f7f7f7; }
</style>

<style scoped>
* { box-sizing: border-box; }
.app {
  display: flex; flex-direction: column; height: 100vh; overflow: hidden;
  border: 1px solid #808080; border-bottom-width: 2px; background: #f7f7f7; color: #111;
  font: 13px/20px "Open Sans", "Noto Sans", sans-serif;
}
button { font: inherit; color: inherit; background: none; border: 0; padding: 0; display: flex; align-items: center; justify-content: center; white-space: nowrap; }
i { display: block; flex: none; font-style: normal; }
svg { display: block; flex: none; }
ul { list-style: none; margin: 0; padding: 0; }

.titlebar { display: flex; align-items: center; height: 36px; background: #fff; padding: 0 2px 2px 7px; flex: none; }
.logo { width: 20px; height: 20px; margin-right: 6px; }
.caption { flex: 1; font-size: 14px; }
.sys { width: 59px; height: 34px; }
.sys svg { width: 12px; height: 12px; stroke: #111; fill: none; }

.menubar { display: flex; align-items: center; height: 24px; flex: none; gap: 14px; }
.menulogo { width: 19px; height: 15px; margin-right: -6px; }

.toolbar { display: flex; align-items: center; height: 35px; flex: none; border-top: 1px solid #dedede; }
.toolbar.main { padding-bottom: 2px; }
.grip { width: 11px; height: 28px; background: radial-gradient(circle, #c4c4c4 1px, transparent 2px) 3px 0 / 3px 4px repeat-y; }
.tool { width: 31px; height: 30px; flex: none; border: 1px solid transparent; }
.tool svg { width: 24px; height: 24px; }
.tool.on, .drop.on { background: #cce4f7; border: 1px solid #90c8f6; }
.drop { width: 15px; height: 30px; flex: none; padding-right: 3px; border: 1px solid transparent; }
.tri { width: 0; height: 0; border: 4px solid transparent; }
.tri.down { border-width: 5px 5px 0; border-top-color: #000; }
.off .tri.down { border-top-color: #777; }
.tri.left { border-width: 4px 5px 4px 0; border-right-color: #000; }
.tri.right { border-width: 4px 0 4px 5px; border-left-color: #000; }
.sep { width: 1px; height: 26px; margin: 0 4px 0 3px; background: #cfcfcf; }
.end { width: 1px; align-self: stretch; background: #cfcfcf; }
.fill { flex: 1; }
.more { width: 17px; flex: none; }
.more svg { width: 9px; height: 7px; fill: none; stroke: #444; }

.combo { display: flex; align-items: center; height: 24px; background: #e6e6f2; min-width: 0; flex: none; }
.combo select { appearance: none; border: 0; background: none; font: inherit; color: inherit; padding: 0; margin: 0; flex: 1; min-width: 0; }
.chev { width: 10px; height: 6px; margin: 0 5px; stroke: #555; fill: none; stroke-width: 1; }
.swatch { width: 14px; height: 14px; background: #ccffff; margin-left: 4px; }
.badge { font-weight: 400; width: 38px; height: 16px; line-height: 17px; text-align: center; background: #c96a6a; color: #fff; margin: 0 6px 0 5px; }
.co { padding-right: 6px; border-right: 1px solid #fff; margin-right: 6px; }
.case { width: 289px; }
.case .swatch { margin-left: 5px; }
.axes { width: 150px; }
.axes .swatch { margin-right: 6px; }
.step { width: 19px; height: 24px; background: #e6e6f2; margin-left: 1px; flex: none; }
.case ~ .step { width: 20px; }
.step.dis { background: #cfcfcf; }
.step.dis .tri.left { border-right-color: #555; }
.step.dis .tri.right { border-left-color: #555; }
.pic { width: 19px; height: 19px; }
.ic { width: 21px; height: 21px; }

.body { display: flex; flex: 1; min-height: 0; gap: 5px; }
.navigator { width: 317px; flex: none; display: flex; flex-direction: column; background: #fff; border-right: 2px solid #c6c6d4; margin-bottom: 2px; }
.dockhead { display: flex; align-items: center; background: #d8e5f2; height: 25px; padding: 0 0 0 7px; flex: none; }
.dockhead h2 { flex: 1; margin: 0; padding-top: 2px; font-size: 14px; font-weight: 700; color: #404040; white-space: nowrap; }
.dockhead button { width: 26px; height: 24px; }
.dockhead svg { width: 12px; height: 12px; fill: none; stroke: #333; stroke-width: 1; }
.dockhead .x { stroke-width: 2; }
.navigator .dockhead { margin-right: -2px; padding-left: 6px; padding-right: 1px; }
.pickrow { display: flex; align-items: center; height: 31px; margin: 3px -2px 0 1px; border: 3px solid #80cf3c; padding: 0 2px; background: #f7f7f7; flex: none; }
.pickrow .combo { flex: 1; padding-left: 3px; gap: 5px; }
.pickrow .step { width: 20px; }
.tree { padding-left: 6px; }
.upper { flex: 1; border-top: 9px solid #f7f7f7; min-height: 0; }
.row { display: flex; align-items: center; height: 23px; white-space: nowrap; }
.row.child { padding-left: 25px; }
.row.long { font-size: 12px; }
.row span { padding: 3px 0 0 5px; }
.row .ic { margin-left: 5px; }
.exp { width: 12px; margin-right: 10px; }
.exp svg { width: 10px; height: 10px; fill: none; stroke: #333; stroke-width: 2; margin: 0 0 0 2px; }
.exp.right svg { stroke: #aaa; }
input[type='checkbox'], input[type='radio'] { appearance: none; width: 17px; height: 17px; margin: 0; border: 1px solid #333; background: #fff; flex: none; position: relative; }
input[type='radio'] { border-radius: 50%; }
input[type='radio']:checked { background: radial-gradient(circle, #222 4px, #fff 5px); }
input[type='checkbox']:checked::after { content: ''; position: absolute; left: 4px; top: 0; width: 6px; height: 11px; border: solid #333; border-width: 0 1px 1px 0; transform: rotate(42deg); }
input.part { background: #cce4f7; border-color: #1a66a8; }
.modes { display: flex; align-items: center; height: 26px; margin-left: 71px; margin-right: 1px; padding-top: 2px; }
.modes .combo { flex: 1; height: 21px; background: #c5e8ae; font-size: 12px; }
.c1 { width: 26px; padding-left: 5px; }
.c2 { width: 60px; padding-left: 6px; }
.modes select { padding-left: 6px; }
.split { height: 9px; background: #f7f7f7; flex: none; }
.navtabs { display: flex; height: 31px; flex: none; background: #f7f7f7; margin-top: 32px; padding-left: 2px; border-bottom: 1px solid #c6c6d4; border-top: 1px solid #c6c6d4; }
.navtabs button { width: 38px; height: 27px; border-right: 1px solid #c6c6d4; background: #ececec; border-bottom: 1px solid #c6c6d4; }
.navtabs button.on { background: #fff; height: 29px; margin-top: -1px; }
.navtabs svg { width: 21px; height: 21px; }

.work { flex: 1; min-width: 0; display: flex; flex-direction: column; gap: 5px; margin-right: 2px; }
.view { flex: 1; min-height: 0; position: relative; background: #fff; }
.scene { width: 100%; height: 100%; }
.scene text { font: 13px "Liberation Sans", Arial, sans-serif; }
.scene .val { fill: #ff0; font-size: 12px; }
.scene .face { font-size: 18px; font-weight: 700; }
.scene .small { font-size: 15px; }
.scene .top { font-size: 8px; }
.ghost { fill: #5f93c9; opacity: 0.9; }
.ghostline { stroke: #3f71a8; opacity: 0.6; }
.dash { stroke: #7777b8; stroke-dasharray: 3 1; fill: none; }
.longdash { stroke: #8080c0; stroke-dasharray: 14 6; fill: none; opacity: 0.8; }
.hatch { fill: none; stroke: #111; stroke-width: 2; stroke-dasharray: 1 1; }

.panel { position: absolute; top: 147px; right: 20px; width: 271px; background: #fff; box-shadow: 0 1px 8px rgba(0, 0, 0, 0.45); border: 1px solid #d0d0da; }
.phead { display: flex; align-items: center; height: 38px; padding-left: 8px; border-bottom: 1px solid #c6c6d4; font-size: 14px; color: #999; }
.phead span { flex: 1; }
.phead button { width: 25px; height: 25px; background: #e2e2e2; color: #fff; }
.pname { padding: 4px 10px 8px; line-height: 18px; height: 48px; }
.legend { display: flex; background: #f7f7f7; height: 242px; font-size: 12px; }
.legend li { line-height: 33px; height: 33px; text-align: right; }
.vals { width: 68px; padding-top: 7px; }
.cols { width: 51px; margin: 24px 0 0 16px; }
.cols i { height: 31px; margin-bottom: 2px; }
.pcts { width: 60px; padding-top: 24px; }
.range { width: 21px; height: 212px; margin: 15px 24px 0 9px; position: relative; background: linear-gradient(#dcdcdc, #dcdcdc) center / 3px 100% no-repeat; flex: none; }
.range input { position: absolute; inset: 0; width: 21px; height: 212px; margin: 0; appearance: none; background: none; writing-mode: vertical-lr; direction: rtl; pointer-events: none; }
.range input::-webkit-slider-thumb { appearance: none; width: 21px; height: 12px; background: #0078d7; pointer-events: auto; }
.vbar { width: 20px; display: flex; flex-direction: column; background: #f0f0f0; flex: none; }
.vbar button { height: 21px; }
.vbar .chev { stroke-width: 2; }
.thumb { background: #cdcdcd; }
.thumb.full { flex: 1; }
.thumb.short { height: 22px; }
.legend .vbar { margin-left: auto; }
.pbtns { display: flex; justify-content: flex-end; gap: 6px; padding: 6px; height: 36px; }
.pbtns button { width: 29px; height: 24px; background: #cce4f7; }
.pbtns .sel { border: 1px solid #0a5ca8; }
.pbtns svg { width: 21px; height: 21px; }
.ptabs { display: flex; height: 29px; background: #f7f7f7; border-top: 1px solid #c6c6d4; }
.ptabs button { width: 38px; height: 27px; border: 1px solid #c6c6d4; border-left: 0; border-top: 0; background: #ececec; }
.ptabs button.on { width: 39px; background: #fff; border-bottom: 0; height: 29px; margin-top: -1px; }
.ptabs svg { width: 19px; height: 19px; }

.results { flex: none; }
.submenu { display: flex; gap: 15px; height: 24px; padding: 1px 0 0 8px; }
.toolbar.sub { padding: 0 0 1px 2px; }
.sub .step + .sep { margin-left: 4px; }
.w1 { width: 158px; }
.w2 { width: 201px; margin-left: 2px; }
.w3 { width: 202px; }
.w1, .w2 { padding-left: 4px; gap: 6px; }

.tablearea { display: flex; position: relative; border-top: 1px solid #c6c6d4; border-left: 1px solid #c6c6d4; }
table { flex: 1; width: 0; table-layout: fixed; border-collapse: separate; border-spacing: 0; }
.cf { width: 76px; } .cm { width: 75px; } .ca { width: 55px; } .cb { width: 51px; } .cv { width: 106px; }
th { font-weight: 400; padding: 0; background: #efefef; border-right: 1px solid #cfcfcf; border-bottom: 1px solid #cfcfcf; height: 20px; line-height: 19px; }
.strip th { height: 13px; background: #e0e0e0; border-color: #fff; }
th.dark { background: #e0e0e0; border-right-color: #fff; border-bottom-color: #fff; }
th.nb { border-bottom-color: #efefef; }
th.two { line-height: 18px; padding-top: 3px; }
th.member { vertical-align: top; color: #222; line-height: 20px; font-size: 12px; }
sub { font-size: 12px; vertical-align: -1px; line-height: 12px; }
td { padding: 1px 0 0; height: 20px; line-height: 18px; font-size: 12px; text-align: center; border-right: 1px solid #d8d8d8; border-bottom: 1px solid #d8d8d8; background: #fffdf4; }
tbody tr:nth-child(odd) td { background: #fff8e6; }
td.len { text-align: right; padding-right: 4px; }
.num { display: flex; justify-content: space-between; align-items: center; padding: 0 21px 0 5px; }
.num i { height: 15px; box-sizing: content-box; border-left: 1px solid #bbb; background: #ffb9b9; }
tr > :last-child { border-right: 0; }
.mark { position: absolute; left: 234px; bottom: -2px; width: 611px; height: 23px; border: 3px solid #80cf3c; }
.hbar { display: flex; height: 20px; background: #f0f0f0; margin: 1px 21px 0 1px; }
.hbar button { width: 20px; }
.hbar svg { width: 6px; height: 10px; fill: none; stroke: #555; stroke-width: 2; }
.hbar .thumb { flex: 909; }
.hbar .rest { flex: 101; }
.sheets { display: flex; height: 29px; border-top: 1px solid #c6c6d4; overflow: hidden; }
.pager { display: flex; align-items: center; width: 152px; height: 27px; flex: none; padding-left: 1px; }
.pager button { width: 21px; }
.pager svg { width: 10px; height: 10px; fill: #444; stroke: #444; }
.pager span { flex: 1; text-align: center; }
.sheet { height: 25px; padding: 0 5px; border: solid #c6c6d4; border-width: 0 1px 1px 0; background: #ececec; flex: none; }
.sheet.first { padding: 0 7px 0 1px; }
.sheet.on { background: #fff; height: 27px; }
.scroll { flex: 1; height: 24px; }
.scroll .tri { border-top-width: 6px; border-bottom-width: 6px; }
.scroll.off .tri { border-left-color: #999; }

.status { display: flex; align-items: center; height: 25px; flex: none; padding-left: 403px; }
.status button { height: 23px; padding: 0 3px; margin-right: 3px; }
.status .in { background: #ececec; border: 1px solid #d4d4d4; border-width: 1px 1px 0; }
.status span { height: 24px; line-height: 25px; border-left: 1px solid #d8d8d8; padding-left: 5px; flex: none; white-space: nowrap; }
.s1 { width: 101px; } .s2 { width: 131px; } .s3 { width: 194px; } .s4 { width: 81px; } .s5 { width: 94px; }
.resize { width: 12px; height: 12px; margin-left: auto; align-self: flex-end; }
</style>
